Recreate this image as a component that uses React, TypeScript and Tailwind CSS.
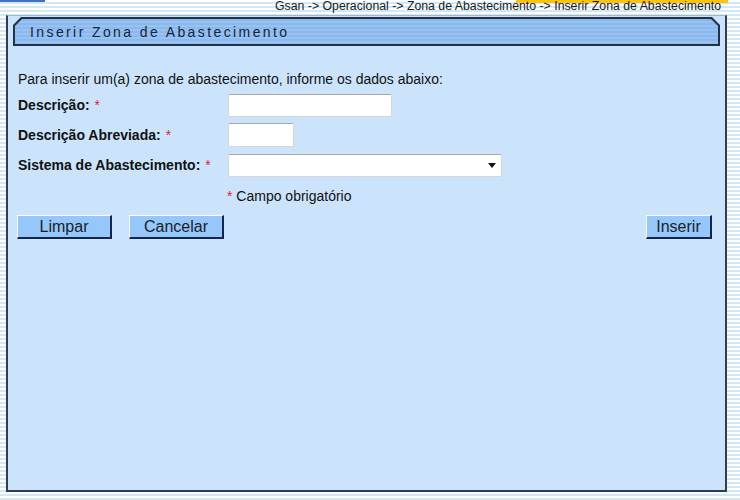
import React from "react";

const Req = () => <span className="text-[#e8202a] ml-[5px] font-normal">*</span>;

function Btn({ children, w }: { children: React.ReactNode; w: string }) {
  return (
    <button
      className={`${w} h-[24px] bg-[#95c7fb] border-t border-l border-t-white border-l-white border-b-2 border-r-2 border-b-[#14244a] border-r-[#14244a] text-[16px] leading-none text-[#1c1c28] flex items-center justify-center`}
    >
      {children}
    </button>
  );
}

export default function App() {
  return (
    <div
      className="w-[740px] h-[500px] overflow-hidden bg-[repeating-linear-gradient(180deg,#ffffff_0px,#ffffff_2px,#d3e8f7_2px,#d3e8f7_4px)]"
      style={{ fontFamily: '"Liberation Sans", Arial, sans-serif' }}
    >
      {/* top breadcrumb row */}
      <div className="relative h-[15px]">
        <div className="absolute left-0 top-0 w-[45px] h-[2px] bg-[#3f72c0]" />
        <div className="absolute left-[516px] top-0 w-[212px] h-[3px] bg-[#fcc20c]" />
        <div className="relative flex justify-end pr-[19px] text-[12.3px] leading-[13px] text-[#1a1a1a]">
          Gsan -&gt; Operacional -&gt; Zona de Abastecimento -&gt; Inserir Zona de Abastecimento
        </div>
      </div>

      {/* main panel */}
      <div className="ml-[6px] w-[721px] h-[477px] bg-[#cbe4fc] border-l-2 border-r-2 border-b-2 border-t border-l-[#2e3d55] border-r-[#2e3d55] border-b-[#2e3d55] border-t-[#9fb6cc] flex flex-col">
        {/* header bar */}
        <div className="ml-[5px] mt-px w-[707px] h-[29px] bg-[#243247] p-[2px] [clip-path:polygon(8px_0,calc(100%_-_8px)_0,100%_8px,100%_100%,0_100%,0_8px)]">
          <div className="h-full w-full flex items-center pl-[15px] pt-px bg-[repeating-linear-gradient(180deg,#8bb9ee_0px,#8bb9ee_2px,#98c2f2_2px,#98c2f2_4px)] [clip-path:polygon(7px_0,calc(100%_-_7px)_0,100%_7px,100%_100%,0_100%,0_7px)]">
            <span className="text-[14px] tracking-[2.4px] text-[#16243a]">
              Inserir Zona de Abastecimento
            </span>
          </div>
        </div>

        <div className="pl-[10px] pr-[13px]">
          <div className="mt-[25px] text-[14px] leading-[16px] text-[#111]">
            Para inserir um(a) zona de abastecimento, informe os dados abaixo:
          </div>

          <div className="mt-[7px] grid grid-cols-[210px_1fr] gap-y-[6px] items-center text-[14px] font-bold text-[#111]">
            <div>
              Descrição:<Req />
            </div>
            <div className="h-[23px] w-[164px] bg-white rounded-[2px] border border-[#d6d6d6] border-t-[#a8a8a8]" />

            <div>
              Descrição Abreviada:<Req />
            </div>
            <div className="h-[24px] w-[66px] bg-white rounded-[2px] border border-[#d6d6d6] border-t-[#a8a8a8]" />

            <div className="mt-[1px]">
              Sistema de Abastecimento:<Req />
            </div>
            <div className="mt-[1px] h-[23px] w-[274px] bg-white rounded-[2px] border border-[#d6d6d6] border-t-[#a8a8a8] flex items-center justify-end pr-[5px]">
              <div className="w-0 h-0 border-l-[4px] border-r-[4px] border-t-[5px] border-l-transparent border-r-transparent border-t-[#111]" />
            </div>
          </div>

          <div className="mt-[11px] pl-[209px] text-[14px] leading-[16px] text-[#111]">
            <span className="text-[#e8202a]">*</span> Campo obrigatório
          </div>

          <div className="mt-[11px] flex items-center -ml-px">
            <Btn w="w-[95px]">Limpar</Btn>
            <div className="w-[17px]" />
            <Btn w="w-[95px]">Cancelar</Btn>
            <div className="flex-1" />
            <Btn w="w-[66px]">Inserir</Btn>
          </div>
        </div>
      </div>
    </div>
  );
}
